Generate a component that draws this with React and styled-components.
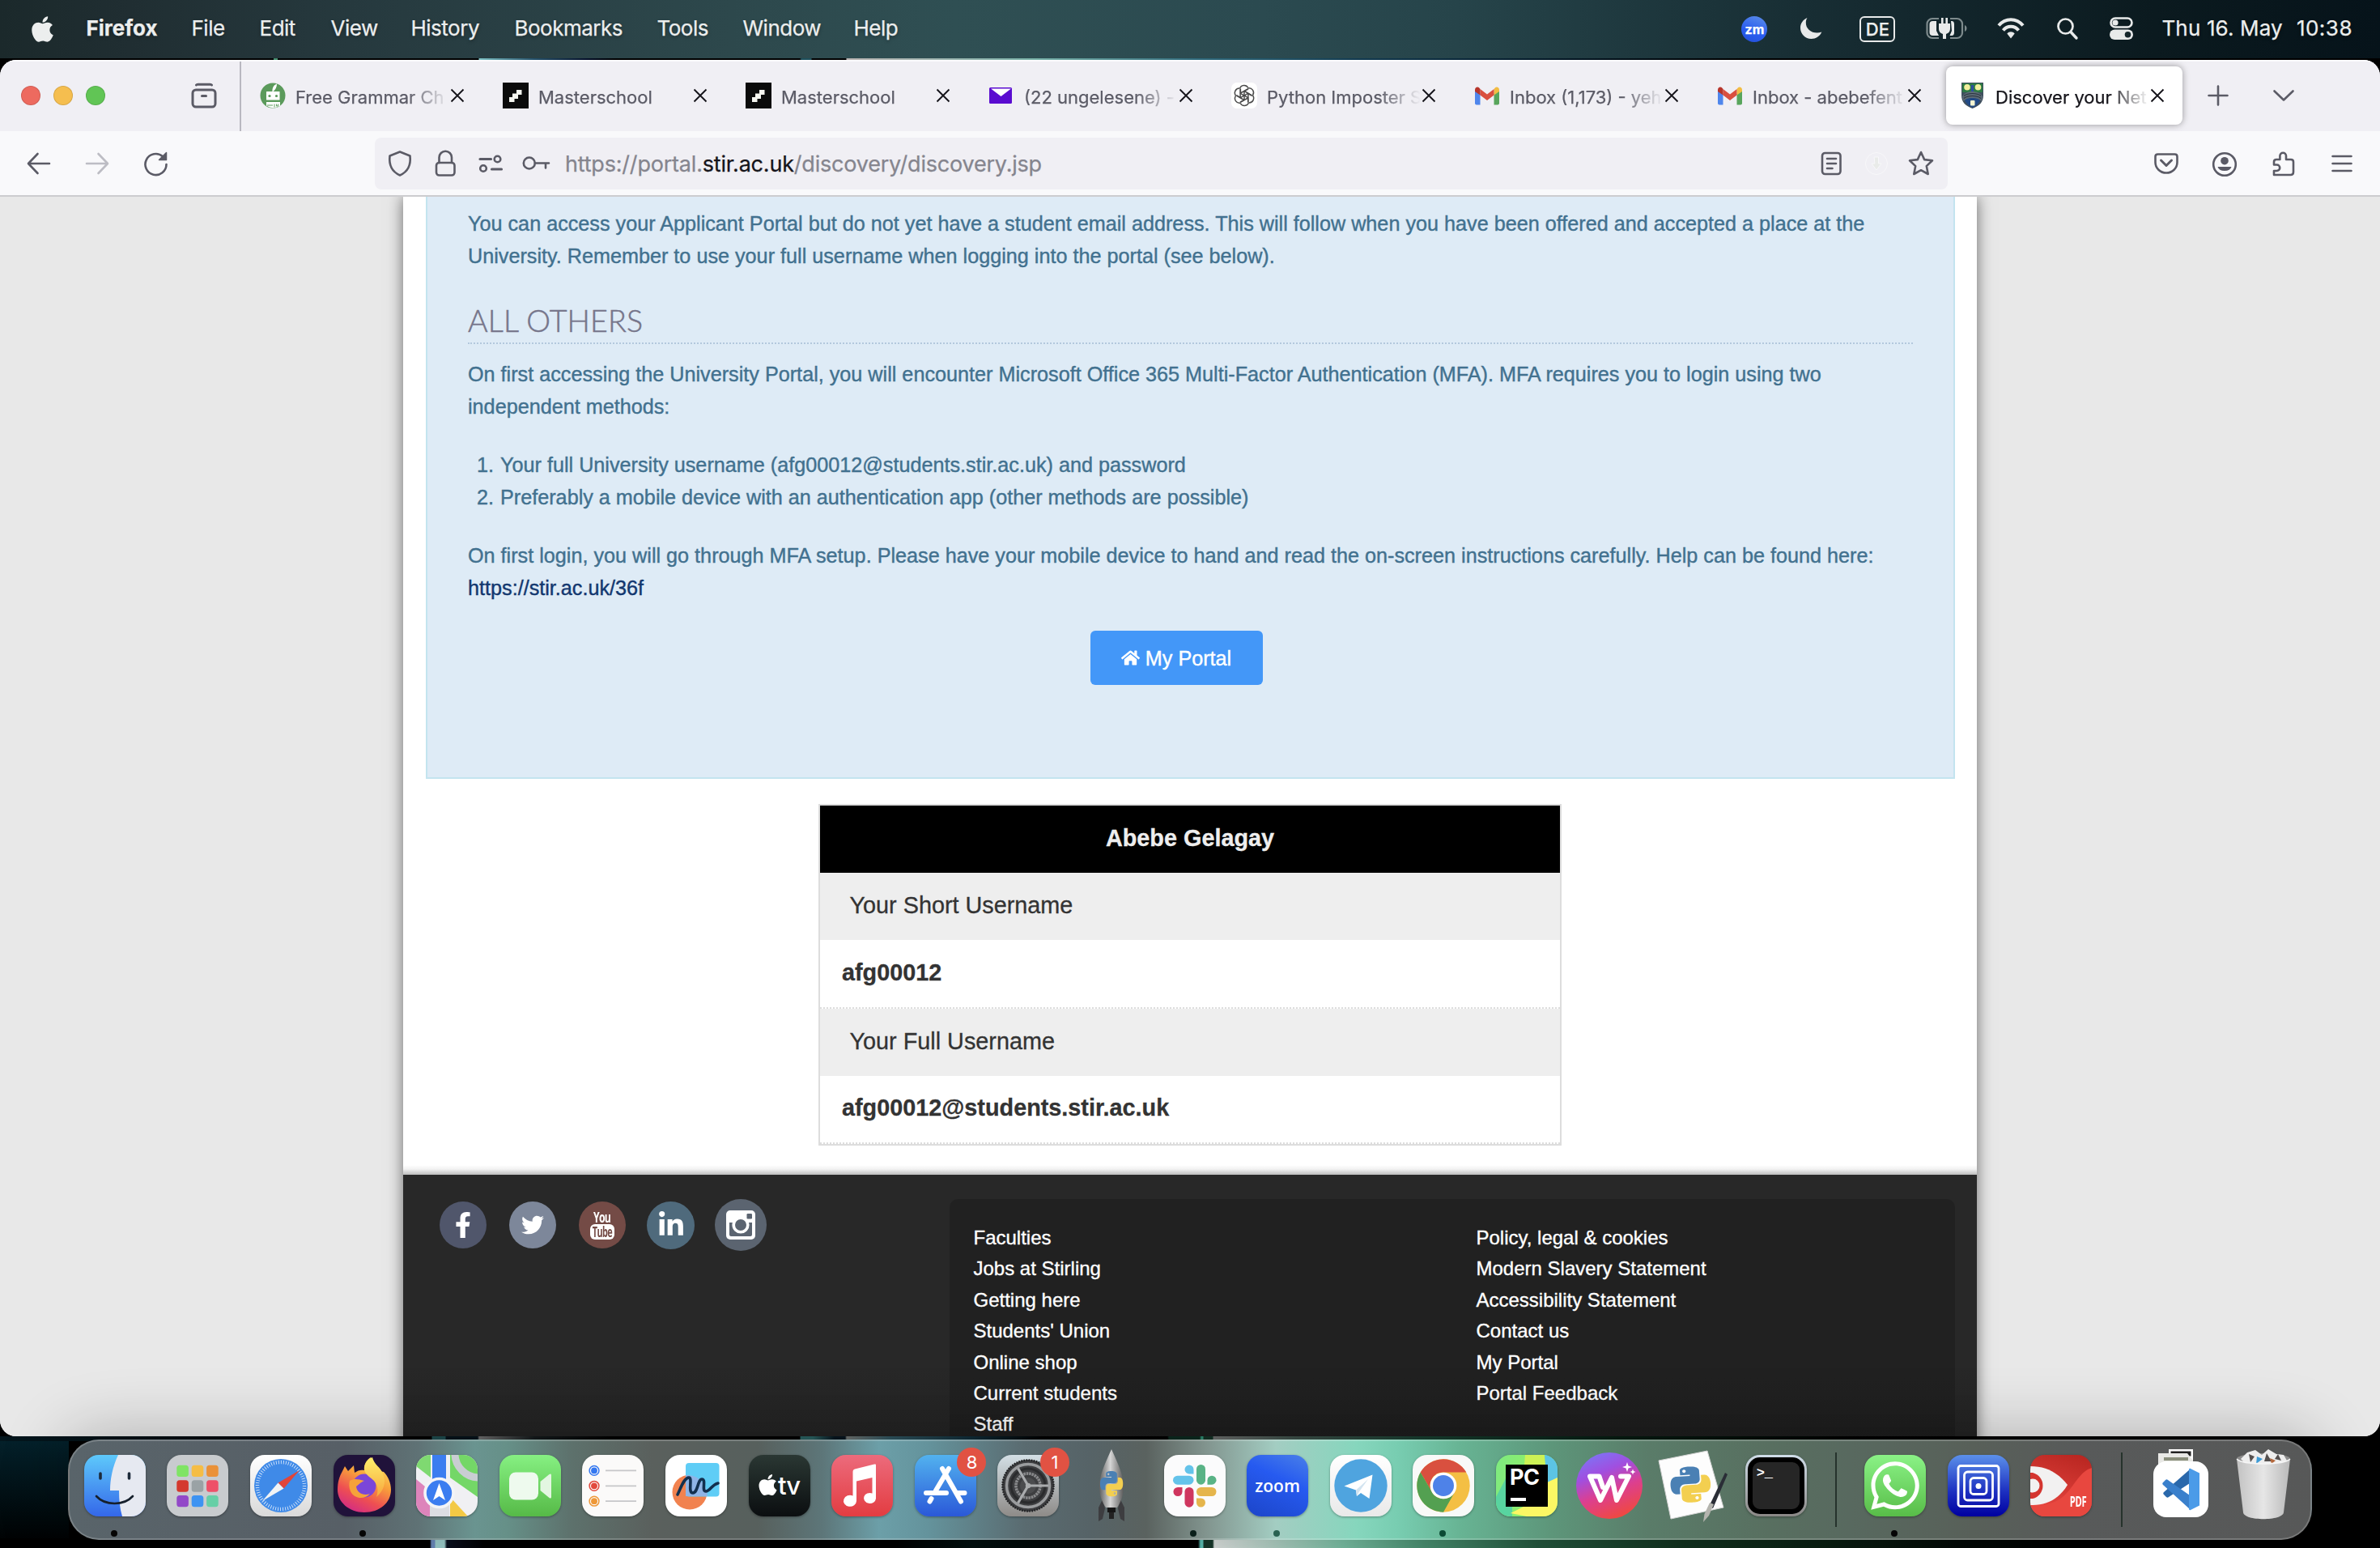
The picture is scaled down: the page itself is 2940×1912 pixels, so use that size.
import React from 'react';
import styled, { createGlobalStyle, css } from 'styled-components';
import { FaApple, FaHome, FaFacebookF, FaTwitter, FaLinkedinIn, FaWhatsapp } from 'react-icons/fa';

const SANS = '"Liberation Sans", Arial, sans-serif';
const UI = 'Inter, "Liberation Sans", sans-serif';

const GlobalStyle = createGlobalStyle`
  *, *::before, *::after { box-sizing: border-box; }
  html, body { margin: 0; padding: 0; background: #000; }
  body { width: 2940px; height: 1912px; overflow: hidden; font-family: ${UI}; }
  svg { display: block; flex: none; overflow: visible; }
  p, h2, ol, ul { margin: 0; padding: 0; font-weight: inherit; }
`;

/* ---------- Desktop ---------- */

const Desktop = styled.div`
  width: 2940px;
  height: 1912px;
  display: flex;
  flex-direction: column;
  overflow: hidden;
  background:
    linear-gradient(90deg, #000 0 338px, #3f8a6a 338px 343px, #000 343px 591px, #7ec3c6 592px, #24516b 660px, #05102a 725px, #000 760px 988px, #1d4f5c 990px 1002px, #000 1003px 1045px, #b9b3b1 1046px, #9fb5b0 1160px, #79b3a9 1280px, #2f6a7c 1480px, #123a50 1680px, #061c2b 1900px, #000 2150px) 0 72px / 100% 3px no-repeat,
    linear-gradient(90deg, #04161d 0, #020a0e 300px, #000 500px 533px, #1e4d50 534px 550px, #06131b 551px 590px, #6f6f6f 592px, #141a1c 660px, #000 760px 988px, #2a6262 989px 1004px, #07151f 1031px 1044px, #6f7472 1046px, #2f5560 1100px, #0f2c38 1200px, #000 1290px 1442px, #0c2a20 1444px 1482px, #2f8f74 1484px 1486px, #143226 1487px 1498px, #6c6e6d 1499px, #3c5049 1600px, #173f30 1760px, #061c12 2000px, #000 2300px) 0 1774px / 100% 6px no-repeat,
    linear-gradient(90deg, #000 0 531px, #6f8fc4 533px 537px, #a3d6d5 538px 549px, #0a1020 552px, #000 600px 1100px, #02100f 1200px, #000 1400px 1480px, #5fc7bb 1483px 1486px, #183a2c 1487px 1498px, #e3e8e6 1500px, #b7d6ca 1570px, #7cc4a8 1660px, #4b9474 1760px, #255a40 1900px, #123420 2080px, #0a2113 2240px, #030a06 2420px, #000 2560px) 0 100% / 100% 12px no-repeat,
    linear-gradient(180deg, #04222c 0, #000 100%) 0 1774px / 85px 138px no-repeat,
    #000;
`;

/* ---------- Menu bar ---------- */

const MenuBar = styled.header`
  flex: none;
  height: 72px;
  margin-bottom: 2px;
  padding: 0 34px 3px 39px;
  display: flex;
  align-items: center;
  color: #eceeee;
  font: 400 26px/32px ${UI};
  letter-spacing: -0.5px;
  text-shadow: 0 2px 4px rgba(0, 0, 0, 0.35);
  -webkit-text-stroke: 0.25px currentColor;
  background: linear-gradient(90deg, #1b292b 0, #202e32 160px, #26393e 430px, #2d484c 900px, #2f4f53 1180px, #2b4a50 1560px, #26444a 1800px, #1d363c 2060px, #14282e 2350px, #0b1a1f 2660px, #06131a 2940px);
`;
const AppleMark = styled(FaApple)`
  width: 27px;
  height: 36px;
  margin: 2px 40.5px 0 0;
`;
const MenuItem = styled.span`
  width: ${(p) => p.$w}px;
  white-space: nowrap;
  ${(p) => p.$bold && css`font-weight: 700; letter-spacing: 0;`}
`;
const StatusArea = styled.div`
  margin-left: auto;
  display: flex;
  align-items: center;
`;
const Status = styled.span`
  margin-left: ${(p) => p.$gap}px;
  letter-spacing: ${(p) => p.$ls || 0}px;
  white-space: nowrap;
`;
const ZoomDot = styled(Status)`
  width: 32px;
  height: 32px;
  margin-top: 2px;
  border-radius: 50%;
  display: grid;
  place-items: center;
  background: linear-gradient(200deg, #5d8fe8, #2a5cf0 60%, #2450d8);
  color: #fff;
  font: 700 16px/20px ${UI};
  text-shadow: none;
`;
const LangBox = styled(Status)`
  width: 44px;
  height: 32px;
  margin-top: 2px;
  border: 2px solid #e8eaea;
  border-radius: 6px;
  display: grid;
  place-items: center;
  font: 500 22px/26px ${UI};
`;

/* ---------- Browser window ---------- */

const BrowserWindow = styled.section`
  flex: none;
  height: 1700px;
  display: flex;
  flex-direction: column;
  border-radius: 20px;
  overflow: hidden;
  background: #f9f9fb;
`;
const TabStrip = styled.nav`
  flex: none;
  height: 88px;
  display: flex;
  align-items: center;
  background: #f0eff4;
  box-shadow: inset 0 2px 0 #fbfbfd;
`;
const TrafficLights = styled.div`
  display: flex;
  gap: 16px;
  padding-left: 26px;
  width: 236px;
`;
const Light = styled.i`
  width: 24px;
  height: 24px;
  border-radius: 50%;
  background: ${(p) => p.$c};
  border: 1px solid rgba(0, 0, 0, 0.12);
`;
const StripDivider = styled.i`
  width: 2px;
  height: 86px;
  margin: 2px 6px 0 28px;
  background: #b9b8c0;
`;
const Tab = styled.div`
  flex: none;
  width: 292px;
  height: 72px;
  margin-right: 8px;
  padding-left: 17px;
  border-radius: 8px;
  display: flex;
  align-items: center;
  color: ${(p) => (p.$active ? '#15141a' : '#5b5b66')};
  ${(p) => p.$active && css`background: #fff; box-shadow: 0 0 8px rgba(0, 0, 0, 0.38);`}
`;
const TabLabel = styled.span`
  width: 190px;
  margin-left: 12px;
  padding-top: 3px;
  overflow: hidden;
  white-space: nowrap;
  font: 400 22px/30px ${UI};
  -webkit-text-stroke: 0.25px currentColor;
  mask-image: linear-gradient(90deg, #000 138px, transparent 190px);
`;
const CloseIcon = styled.svg.attrs({ viewBox: '0 0 18 18' })`
  width: 18px;
  height: 18px;
  margin-left: 1px;
  stroke: #15141a;
  stroke-width: 1.9;
  fill: none;
`;
const StripIcon = styled.svg`
  width: 32px;
  height: 32px;
  margin-left: ${(p) => p.$gap || 0}px;
  fill: none;
  stroke: #5b5b66;
  stroke-width: ${(p) => p.$sw || 3};
  stroke-linecap: round;
  stroke-linejoin: round;
`;
const Toolbar = styled.div`
  flex: none;
  height: 81px;
  display: flex;
  align-items: center;
  padding: 0 31px 0 32px;
  border-bottom: 2px solid #cccccf;
  background: #f9f9fb;
`;
const IconGroup = styled.div`
  display: flex;
  align-items: center;
  gap: ${(p) => p.$gap}px;
`;
const UrlBar = styled.div`
  width: 1943px;
  height: 64px;
  margin: 0 auto 0 255px;
  padding: 0 17px 0 15px;
  border-radius: 8px;
  display: flex;
  align-items: center;
  background: #f0eff4;
`;
const UrlText = styled.span`
  flex: 1;
  margin-left: 20px;
  padding-top: 3px;
  font: 400 27px/36px ${UI};
  letter-spacing: -0.2px;
  -webkit-text-stroke: 0.25px currentColor;
  color: #85858e;
  b { font-weight: 400; color: #15141a; }
`;
const ToolSvg = styled.svg.attrs({ viewBox: '0 0 32 32' })`
  width: 32px;
  height: 32px;
  fill: none;
  stroke: ${(p) => p.$c || '#5b5b66'};
  stroke-width: 2.6;
  stroke-linecap: round;
  stroke-linejoin: round;
`;

/* ---------- Web page ---------- */

const Viewport = styled.main`
  flex: 1;
  min-height: 0;
  overflow: hidden;
  background: #e8e8e8;
`;
const Sheet = styled.div`
  width: 1944px;
  margin-left: 498px;
  background: #fff;
  box-shadow: 0 0 18px rgba(0, 0, 0, 0.55);
`;
const InfoPanel = styled.section`
  width: 1889px;
  height: 719px;
  margin-left: 28px;
  padding: 12.6px 50px 0 50px;
  border: 2px solid #c3e4ef;
  border-top: 0;
  background: #deebf6;
  color: #42718f;
  font: 400 25.2px/40.3px ${SANS};
  letter-spacing: 0.005px;
  -webkit-text-stroke: 0.4px currentColor;
`;
const Para = styled.p`
  margin-top: ${(p) => p.$mt || 0}px;
  white-space: nowrap;
`;
const PanelHeading = styled.h2`
  height: 52px;
  margin-top: 37px;
  border-bottom: 2px dotted #b3c8dd;
  font: 300 37.6px/46px Lato, ${SANS};
  letter-spacing: 0.15px;
  color: #76758a;
  -webkit-text-stroke: 0.5px currentColor;
`;
const Steps = styled.ol`
  margin-top: 31.6px;
  list-style: none;
`;
const Step = styled.li`
  display: grid;
  grid-template-columns: 32px auto;
  column-gap: 8px;
  & > span:first-child { text-align: right; }
`;
const PanelLink = styled.a`
  color: #12376f;
`;
const ButtonRow = styled.div`
  margin-top: 33px;
  padding-right: 35px;
  display: flex;
  justify-content: center;
`;
const PortalButton = styled.button`
  width: 213px;
  height: 67px;
  border: 0;
  border-radius: 6px;
  display: flex;
  align-items: center;
  justify-content: center;
  gap: 7px;
  background: #4397f8;
  color: #fff;
  font: 400 25.2px/32px ${SANS};
  -webkit-text-stroke: 0.4px currentColor;
  svg { width: 23px; height: 23px; }
`;
const UserCard = styled.section`
  width: 918px;
  margin: 31px 0 0 513px;
  border: 2px solid #ddd;
  font: 400 28.8px/34px ${SANS};
  color: #333;
  -webkit-text-stroke: 0.3px currentColor;
`;
const CardRow = styled.div`
  height: ${(p) => p.$h || 83}px;
  display: flex;
  align-items: center;
  ${(p) => p.$kind === 'head' && css`justify-content: center; padding-bottom: 3px; background: #000; color: #eee; font-weight: 700;`}
  ${(p) => p.$kind === 'label' && css`padding: 0 0 4px 36.5px; background: #eee;`}
  ${(p) => p.$kind === 'value' && css`padding: 0 0 4px 27px; background: #fff; font-weight: 700; border-bottom: 2px dotted #ddd;`}
`;
const SheetGap = styled.div`
  height: 36px;
  background: linear-gradient(180deg, rgba(0, 0, 0, 0) 24px, rgba(0, 0, 0, 0.05) 29px, rgba(0, 0, 0, 0.26) 36px);
`;
const Footer = styled.footer`
  height: 340px;
  padding: 30px 27px 0 44.5px;
  display: flex;
  align-items: flex-start;
  justify-content: space-between;
  background: linear-gradient(180deg, #282828 240px, #232323 320px);
`;
const SocialRow = styled.div`
  height: 64px;
  display: flex;
  align-items: center;
`;
const Social = styled.a`
  width: ${(p) => p.$d}px;
  height: ${(p) => p.$d}px;
  margin-right: ${(p) => p.$mr}px;
  border-radius: 50%;
  display: flex;
  flex-direction: column;
  align-items: center;
  justify-content: center;
  background: ${(p) => p.$c};
  color: #fff;
`;
const YouWord = styled.span`
  font: 700 18px/17px "Open Sans", ${SANS};
  letter-spacing: -1px;
  transform: scaleX(0.68);
`;
const TubeWord = styled.span`
  width: 30px;
  height: 19px;
  border-radius: 6px;
  display: flex;
  justify-content: center;
  background: #fff;
  color: #744b46;
  font: 700 17px/19px "Open Sans", ${SANS};
  letter-spacing: -1px;
  & > span { transform: scaleX(0.64); }
`;
const LinkPanel = styled.div`
  width: 1242px;
  height: 320px;
  padding: 29px 0 0 29.5px;
  border-radius: 10px;
  display: grid;
  grid-template-columns: 621px 1fr;
  background: linear-gradient(180deg, #212121 220px, #1d1d1d 300px);
`;
const LinkList = styled.ul`
  list-style: none;
  color: #fff;
  font: 400 24px/38.4px ${SANS};
  -webkit-text-stroke: 0.35px currentColor;
`;

/* ---------- Dock ---------- */

const Dock = styled.nav`
  position: absolute;
  left: 84px;
  top: 1778px;
  width: 2772px;
  height: 124px;
  padding-left: 4.5px;
  border: 2px solid rgba(255, 255, 255, 0.2);
  border-radius: 38px;
  display: flex;
  align-items: center;
  box-shadow: 0 0 80px 8px rgba(0, 0, 0, 0.24);
  background-origin: border-box;
  background: linear-gradient(90deg, #59646a 0, #575f66 340px, #5f7275 430px, #6a9490 500px, #669088 540px, #5d716c 620px, #5a605d 720px, #57605d 850px, #5d7679 930px, #6c9fa8 1000px, #64939c 1060px, #5a6b70 1180px, #566367 1260px, #5a625f 1330px, #82958f 1405px, #a3cdc2 1490px, #86d6bd 1590px, #78cdb1 1640px, #67b393 1720px, #5d967a 1830px, #5a7c69 1950px, #586f60 2100px, #58695f 2200px, #586059 2350px, #585a5a 2480px, #575858 2772px);
`;
const Slot = styled.div`
  position: relative;
  flex: none;
  width: 102.6px;
  height: 120px;
  display: flex;
  flex-direction: column;
  align-items: center;
  padding-top: ${(p) => p.$top ?? 17}px;
`;
const RunningDot = styled.i`
  position: absolute;
  left: 46px;
  top: 110px;
  width: 8px;
  height: 8px;
  border-radius: 50%;
  background: ${(p) => p.$c || '#050505'};
`;
const Badge = styled.b`
  position: absolute;
  left: 66px;
  top: 8px;
  width: 36px;
  height: 36px;
  border-radius: 50%;
  display: grid;
  place-items: center;
  background: #e15243;
  color: #fff;
  font: 400 22px/26px ${UI};
`;
const DockDivider = styled.i`
  flex: none;
  width: 2px;
  height: 92px;
  margin: 0 20.8px 0 22px;
  background: #26332c;
`;
const Tile = styled.div`
  width: 76px;
  height: 76px;
  border-radius: 18px;
  overflow: hidden;
  display: grid;
  place-items: center;
  background: ${(p) => p.$bg};
  color: #fff;
  box-shadow: 0 1px 3px rgba(0, 0, 0, 0.35);
  & > * { grid-area: 1 / 1; }
`;
const Art = styled.svg.attrs({ viewBox: '0 0 76 76' })`
  width: 76px;
  height: 76px;
`;
const TvMark = styled.span`
  display: flex;
  align-items: center;
  font: 500 31px/32px ${UI};
  letter-spacing: -1px;
  svg { width: 23px; height: 30px; margin: -3px 1px 0 0; }
`;
const ZoomWord = styled.span`
  font: 600 21px/24px "Open Sans", ${UI};
`;
const PcBox = styled.div`
  width: 52px;
  height: 52px;
  padding: 2px 0 0 5px;
  background: #000;
  font: 700 27px/28px ${UI};
  letter-spacing: -0.5px;
  &::after { content: ''; display: block; width: 19px; height: 3.5px; margin: 11px 0 0 1px; background: #fff; }
`;
const TermScreen = styled.div`
  width: 70px;
  height: 70px;
  border-radius: 15px;
  border: 6px solid #000;
  padding: 4px 0 0 5px;
  background: #262626;
  font: 700 17px/20px "Liberation Mono", monospace;
  color: #fff;
`;
const PdfWord = styled.span`
  align-self: end;
  justify-self: end;
  margin: 0 7px 8px 0;
  font: 700 17px/20px "Open Sans", ${SANS};
  letter-spacing: -0.4px;
  transform: scaleX(0.66);
  transform-origin: 100% 50%;
`;

const PY_TOP = 'M14.25.18l.9.2.73.26.59.3.45.32.34.34.25.34.16.33.1.3.04.26.02.2-.01.13V8.5l-.05.63-.13.55-.21.46-.26.38-.3.31-.33.25-.35.19-.35.14-.33.1-.3.07-.26.04-.21.02H8.77l-.69.05-.59.14-.5.22-.41.27-.33.32-.27.35-.2.36-.15.37-.1.35-.07.32-.04.27-.02.21v3.06H3.17l-.21-.03-.28-.07-.32-.12-.35-.18-.36-.26-.36-.36-.35-.46-.32-.59-.28-.73-.21-.88-.14-1.05-.05-1.23.06-1.22.16-1.04.24-.87.32-.71.36-.57.4-.44.42-.33.42-.24.4-.16.36-.1.32-.05.24-.01h.16l.06.01h8.16v-.83H6.18l-.01-2.75-.02-.37.05-.34.11-.31.17-.28.25-.26.31-.23.38-.2.44-.18.51-.15.58-.12.64-.1.71-.06.77-.04.84-.02 1.27.05zm-6.3 1.98l-.23.33-.08.41.08.41.23.34.33.22.41.09.41-.09.33-.22.23-.34.08-.41-.08-.41-.23-.33-.33-.22-.41-.09-.41.09z';
const PY_BOTTOM = 'M21.1 6.11l.28.06.32.12.35.18.36.27.36.35.35.47.32.59.28.73.21.88.14 1.04.05 1.23-.06 1.23-.16 1.04-.24.86-.32.71-.36.57-.4.45-.42.33-.42.24-.4.16-.36.09-.32.05-.24.02-.16-.01h-8.22v.82h5.84l.01 2.76.02.36-.05.34-.11.31-.17.29-.25.25-.31.24-.38.2-.44.17-.51.15-.58.13-.64.09-.71.07-.77.04-.84.01-1.27-.04-1.07-.14-.9-.2-.73-.25-.59-.3-.45-.33-.34-.34-.25-.34-.16-.33-.1-.3-.04-.25-.02-.2.01-.13v-5.34l.05-.64.13-.54.21-.46.26-.38.3-.32.33-.24.35-.2.35-.14.33-.1.3-.06.26-.04.21-.02.13-.01h5.84l.69-.05.59-.14.5-.21.41-.28.33-.32.27-.35.2-.36.15-.36.1-.35.07-.32.04-.28.02-.21V6.07h2.09l.14.01zm-6.47 14.25l-.23.33-.08.41.08.41.23.33.33.23.41.08.41-.08.33-.23.23-.33.08-.41-.08-.41-.23-.33-.33-.23-.41-.08-.41.08z';

const Python = () => (
  <>
    <path d={PY_TOP} fill="#4a80b4" />
    <path d={PY_BOTTOM} fill="#f3cf50" />
  </>
);

/* ---------- Favicons ---------- */

const Fav = styled.svg.attrs({ viewBox: '0 0 32 32' })`
  width: 32px;
  height: 32px;
`;

const Favicons = {
  grammar: (
    <Fav>
      <circle cx="16" cy="16" r="15.5" fill="#5b9a5b" />
      <path d="M15.500 11C15 7 17 3 21 1.500c0 4-1.500 7-4.500 9.500z" fill="#fff" />
      <rect x="8" y="11" width="16.500" height="10.500" rx="0.500" fill="#fff" />
      <circle cx="12" cy="16.500" r="1.600" fill="#5b9a5b" />
      <circle cx="20.500" cy="16.500" r="1.600" fill="#5b9a5b" />
      <path d="M8 24h17v4.500a15 15 0 0 1-17 0z" fill="#fff" />
      <path d="M9 28h7M18 26.500v4M20.500 26.500v2.500h2v-2.500" stroke="#5b9a5b" fill="none" />
    </Fav>
  ),
  master: (
    <Fav>
      <rect width="32" height="32" fill="#0b0b0b" />
      <path d="M8 24v-6h4v-4.500h5V9h6.500v6H19v5h-4.500v4z" fill="#f4f5ef" />
    </Fav>
  ),
  mail: (
    <Fav>
      <rect x="1" y="6" width="28" height="20" rx="1.500" fill="#5a0cd0" />
      <path d="M3 7.500h25L15.500 17z" fill="#fff" />
    </Fav>
  ),
  gpt: (
    <Fav>
      <rect width="32" height="32" rx="7" fill="#fff" />
      <g transform="translate(16 16)" fill="none" stroke="#4a4a4a" strokeWidth="1.500">
        {[0, 60, 120, 180, 240, 300].map((a) => (
          <path key={a} transform={`rotate(${a})`} d="M-5.500 -8.500A5.600 5.600 0 0 1 4.800 -9.500M-4.600 -8.500V-2.600L0.500 0.300M-4.600 -3L4.500 -8.200" />
        ))}
      </g>
    </Fav>
  ),
  gmail: (
    <Fav>
      <path d="M1 9v16.500A2 2 0 0 0 3 27.500h4.500V14z" fill="#4f86ec" />
      <path d="M31 9v16.500a2 2 0 0 1-2 2h-4.500V14z" fill="#58a55c" />
      <path d="M24.500 8v7.500L31 11V9c0-3.500-3.500-4.500-5.500-2.300z" fill="#f2bd42" />
      <path d="M7.500 15.500V8l8.500 6.500L24.500 8v7.500L16 22z" fill="#d94f3f" />
      <path d="M1 9v2l6.500 4.500V8L6.500 6.700C4.500 4.500 1 5.500 1 9z" fill="#b7352b" />
    </Fav>
  ),
  stirling: (
    <Fav>
      <path d="M2 0h27v16c0 8-5 13-13.500 16C7 29 2 24 2 16z" fill="#3f4f5e" />
      <path d="M3 1h25v11H3z" fill="#2d7a45" />
      <path d="M15.500 3v8" stroke="#2f4fa0" strokeWidth="3" />
      <circle cx="9" cy="5.800" r="3.800" fill="#f1ef9c" />
      <circle cx="22.500" cy="5.800" r="3.800" fill="#f1ef9c" />
      <path d="M3 17c5-8 20-8 25 0l-1.500 6c-5-5-17-5-22 0z" fill="#5d6b76" />
      <path d="M5 16.500c5-4 16-4 21 0M5 19.500c5-4 16-4 21 0" fill="none" stroke="#2a353f" strokeWidth="1.200" />
      <path d="M6 22c3-4 16-4 19 0-2 4-5 7-9.500 9C11 29 8 26 6 22z" fill="#224a86" />
      <rect x="13" y="22" width="5.500" height="6.500" rx="1" fill="#f6f5d2" />
    </Fav>
  ),
};

const TABS = [
  ['grammar', 'Free Grammar Ch'],
  ['master', 'Masterschool'],
  ['master', 'Masterschool'],
  ['mail', '(22 ungelesene) -'],
  ['gpt', 'Python Imposter S'],
  ['gmail', 'Inbox (1,173) - yeh'],
  ['gmail', 'Inbox - abebefent'],
  ['stirling', 'Discover your Net'],
];

const MENUS = [['File', 84], ['Edit', 88], ['View', 99], ['History', 128], ['Bookmarks', 176], ['Tools', 106], ['Window', 137], ['Help', 60]];

/* ---------- Dock artwork ---------- */

const Finder = () => (
  <Tile $bg="linear-gradient(180deg,#5ec9fb,#3467e9)">
    <Art>
      <path d="M42 0C35 15 32 30 32 44h11c0 12 1 22 4 32h29V0z" fill="#e6e9f1" />
      <path d="M20 23v6M55.500 23v6" stroke="#1d2a3a" strokeWidth="3.600" strokeLinecap="round" />
      <path d="M15 51c11 12 34 12 45 0" stroke="#16202c" strokeWidth="2.600" fill="none" strokeLinecap="round" />
    </Art>
  </Tile>
);
const PAD_COLORS = ['#7fe464', '#f5bd45', '#ea9138', '#d4392e', '#9aa2a5', '#ee5068', '#9248c8', '#3d93f2', '#66cfa6'];
const Launchpad = () => (
  <Tile $bg="#c8cbce">
    <Art>
      {PAD_COLORS.map((c, i) => (
        <rect key={c} x={12.3 + (i % 3) * 18.4} y={12.700 + Math.floor(i / 3) * 18.600} width="14.600" height="14.400" rx="3.500" fill={c} />
      ))}
    </Art>
  </Tile>
);
const Safari = () => (
  <Tile $bg="linear-gradient(180deg,#fff,#d9d9d9)">
    <Art>
      <circle cx="38" cy="38" r="33" fill="#3f8ae8" />
      <circle cx="38" cy="38" r="29" fill="none" stroke="#d7e7fb" strokeWidth="4.500" strokeDasharray="0.900 2.130" />
      <path d="M61 19L41.500 41.500 34.500 34.500z" fill="#e0453a" />
      <path d="M15 57L34.500 34.500 41.500 41.500z" fill="#f1f3f5" />
    </Art>
  </Tile>
);
const Firefox = () => (
  <Tile $bg="#20123a">
    <Art>
      <defs>
        <linearGradient id="ffBody" x1="0.800" y1="0" x2="0.300" y2="1">
          <stop offset="0" stopColor="#fce866" /><stop offset="0.400" stopColor="#f8a13a" /><stop offset="0.720" stopColor="#ee4f52" /><stop offset="1" stopColor="#d32c83" />
        </linearGradient>
        <linearGradient id="ffTail" x1="0.500" y1="0" x2="0.500" y2="1">
          <stop offset="0" stopColor="#fdf06c" /><stop offset="1" stopColor="#f8a63c" />
        </linearGradient>
      </defs>
      <path d="M11 20l3-6 4 6 7-7 1 9c4-3 8-4 12-3-1-7 3-13 8-16 2 9 8 11 11 17l5 1c5 5 9 13 9 22 0 16-14 28-33 28S5 58 5 43c0-9 2-16 6-23z" fill="url(#ffBody)" />
      <circle cx="38" cy="38" r="14.500" fill="#7b46d8" />
      <path d="M20 32c6-3 10-2 18 0-5 2-7 5-10 7 1 8 9 12 17 9-7 8-20 6-24-3-2-5-2-9-1-13z" fill="#f6a23a" />
      <path d="M48 3c2 9 10 12 13 20 5 12 0 22-8 29 3-9 1-15-3-20-5-5-12-8-12-15 0-6 4-12 10-14z" fill="url(#ffTail)" />
    </Art>
  </Tile>
);
const Maps = () => (
  <Tile $bg="#f0f0f3">
    <Art>
      <path d="M0 0h18v28L0 14z" fill="#7fd971" />
      <path d="M42 0h34v52L42 28z" fill="#74d767" />
      <path d="M48 -4a30 30 0 0 0 32 32" fill="none" stroke="#c9cdd2" strokeWidth="9" />
      <path d="M0 30l17 14v32H0z" fill="#dd84bb" />
      <path d="M42 52l22 24H42z" fill="#f3c945" />
      <rect x="17" y="50" width="24" height="26" fill="#dcdde2" />
      <rect x="20" width="17" height="34" fill="#3b7df0" />
      <circle cx="28.500" cy="47" r="17.500" fill="#3b7df0" stroke="#f3f4f7" strokeWidth="3.600" />
      <path d="M28.500 35l7.500 21-7.500-5-7.500 5z" fill="#fff" />
    </Art>
  </Tile>
);
const FaceTime = () => (
  <Tile $bg="linear-gradient(180deg,#86f082,#56ba47)">
    <Art>
      <rect x="12" y="21.500" width="36" height="34" rx="8" fill="#eefaee" />
      <path d="M50.500 33l11-9c1.500-1 2.500-.5 2.500 1v27c0 1.500-1 2-2.500 1l-11-9z" fill="#e3f6e1" />
    </Art>
  </Tile>
);
const Reminders = () => (
  <Tile $bg="#fbfaf9">
    <Art>
      {['#3478f0', '#e2493c', '#ee9838'].map((c, i) => (
        <g key={c} transform={`translate(0 ${19.400 + i * 18.900})`}>
          <circle cx="15" r="5.900" fill="none" stroke={c} strokeWidth="1.500" />
          <circle cx="15" r="3.900" fill={c} />
          <path d="M29 0h38" stroke="#c6c6c9" strokeWidth="1.800" />
        </g>
      ))}
    </Art>
  </Tile>
);
const Freeform = () => (
  <Tile $bg="#fff">
    <Art>
      <circle cx="30" cy="46" r="21.500" fill="#f1824f" />
      <rect x="25" y="10" width="41.500" height="41.500" rx="4" fill="#5fcdf6" />
      <path d="M25 25c13-1 26 8 27 26H25z" fill="#8fb4e6" />
      <path d="M15 49c4-8 8-21 14-21 5 0-2 19 5 19 6 0 6-17 11-17 6 0-1 15 5 15 5 0 7-8 15-10" fill="none" stroke="#12304f" strokeWidth="3.600" strokeLinecap="round" />
    </Art>
  </Tile>
);
const AppleTv = () => (
  <Tile $bg="linear-gradient(180deg,#2a3733,#0b0e10)">
    <TvMark><FaApple />tv</TvMark>
  </Tile>
);
const Music = () => (
  <Tile $bg="linear-gradient(180deg,#ec6b7c,#e33c41)">
    <Art>
      <path d="M55 12.500v41.500a7.500 6.500 0 1 1-4.500-6.500V28L31 32.500V57a8 7 0 1 1-4.500-6.500V21c0-2 .8-3 2.500-3.500L53 11.500c1.300-.3 2 0 2 1z" fill="#fff" />
    </Art>
  </Tile>
);
const AppStore = () => (
  <Tile $bg="linear-gradient(180deg,#52b2ef,#2a58d8)">
    <Art>
      <g stroke="#fff" strokeWidth="6" strokeLinecap="round">
        <path d="M42 17L26 44M20.500 54L18.500 57.500M34 17L57 57.500M14 47H39M52 47H61.500" />
      </g>
    </Art>
  </Tile>
);
const Settings = () => (
  <Tile $bg="linear-gradient(180deg,#d3dfe5,#8e8b88)">
    <Art fill="none">
      <circle cx="38" cy="38" r="32" fill="#3d3e40" />
      <circle cx="38" cy="38" r="31.500" stroke="#1f2022" strokeWidth="2.500" strokeDasharray="1.600 1.500" />
      <circle cx="38" cy="38" r="26.500" stroke="#9a9c9e" strokeWidth="3.500" />
      <circle cx="38" cy="38" r="21" stroke="#2a2b2d" strokeWidth="3" />
      <circle cx="38" cy="38" r="15" stroke="#88898b" strokeWidth="3.600" strokeDasharray="2.600 .8" />
      <circle cx="38" cy="38" r="10" fill="#4b4c4e" />
      <path d="M38 38H63M38 38L25.500 16.500M38 38L25.500 59.500" stroke="#a9abad" strokeWidth="3.200" />
      <circle cx="38" cy="38" r="3.200" fill="#a9abad" />
    </Art>
  </Tile>
);
const Rocket = () => (
  <svg width="36" height="90" viewBox="0 0 36 90">
    <defs>
      <linearGradient id="hull"><stop offset="0" stopColor="#5f5f5f" /><stop offset=".45" stopColor="#d6d6d6" /><stop offset="1" stopColor="#5a5a5a" /></linearGradient>
    </defs>
    <path d="M7 62L2 72v17l5-3 3-13zM29 62l5 10v17l-5-3-3-13z" fill="#3d3d40" />
    <rect x="13" y="70" width="10" height="8" fill="#161616" />
    <path d="M15 78h6v8h-6z" fill="#222" />
    <path d="M18 0c8 18 15 32 15 46 0 12-4 20-8 26H11C7 66 3 58 3 46 3 32 10 18 18 0z" fill="url(#hull)" />
    <g transform="translate(4 27) scale(1.170 1.300)"><Python /></g>
  </svg>
);
const Slack = () => (
  <Tile $bg="#fbfbfc">
    <Art>
      <g fill="#64c3ea"><rect x="11" y="25.700" width="25.500" height="11" rx="5.500" /><path d="M36.500 23.500h-5.300a5.500 5.500 0 1 1 5.300-5.500z" /></g>
      <g fill="#59b386"><rect x="40" y="12" width="11" height="24.700" rx="5.500" /><path d="M53.500 36.700v-5.500a5.500 5.500 0 1 1 5.500 5.500z" /></g>
      <g fill="#e5b54c"><rect x="40" y="40" width="24.500" height="11" rx="5.500" /><path d="M40 53.500h5.500a5.500 5.500 0 1 1-5.500 5.500z" /></g>
      <g fill="#cf365f"><rect x="25.500" y="40" width="11" height="24.700" rx="5.500" /><path d="M22.500 40v5.500a5.500 5.500 0 1 1-5.500-5.500z" /></g>
    </Art>
  </Tile>
);
const Zoom = () => (
  <Tile $bg="linear-gradient(205deg,#4a80e8,#265af0 40%,#1c45c8)">
    <ZoomWord>zoom</ZoomWord>
  </Tile>
);
const Telegram = () => (
  <Tile $bg="linear-gradient(180deg,#fff,#e9e9e9)">
    <Art>
      <circle cx="38" cy="38" r="32.700" fill="#4fa4df" />
      <path d="M17.500 38.500L52.500 24.500 48.500 54 38 47 33 51 32 43.500z" fill="#fff" />
      <path d="M32 43.500L47 30 36 45.500 33 51z" fill="#d3e4f0" />
    </Art>
  </Tile>
);
const Chrome = () => (
  <Tile $bg="#f8f9f8">
    <Art>
      <circle cx="38" cy="38" r="32.700" fill="#f4bf44" />
      <path d="M9.700 21.600A32.700 32.700 0 0 1 66.300 21.600H38A16 16 0 0 0 24 46z" fill="#d9503f" />
      <path d="M9.700 21.600A32.700 32.700 0 0 0 38 70.700L52 46A16 16 0 0 1 24 46z" fill="#53a051" />
      <circle cx="38" cy="38" r="16.300" fill="#fff" />
      <circle cx="38" cy="38" r="13" fill="#4e82e8" />
    </Art>
  </Tile>
);
const PyCharm = () => (
  <Tile $bg="linear-gradient(100deg,#7eea80,#8dee6c 50%,#74e08a)">
    <Art>
      <path d="M0 52L20 14V76H18Q0 76 0 58z" fill="#58d4a0" />
      <path d="M36 0h24l4 34-30-10z" fill="#cdf255" />
      <path d="M60 0h16v30L63 36z" fill="#5cc4e4" />
      <path d="M76 28v48H38L18 72l20-10 25-28z" fill="#fbf764" />
    </Art>
    <PcBox>PC</PcBox>
  </Tile>
);
const Wps = () => (
  <svg width="82" height="82" viewBox="0 0 82 82">
    <defs>
      <linearGradient id="wps" x1=".25" y1="0" x2=".65" y2="1"><stop offset="0" stopColor="#7d74f5" /><stop offset=".3" stopColor="#a04fe0" /><stop offset=".6" stopColor="#dc3f90" /><stop offset="1" stopColor="#f1493c" /></linearGradient>
    </defs>
    <circle cx="41" cy="41" r="41" fill="url(#wps)" />
    <path d="M33 43L28.500 29.500H17L30 59 44 31 50 59 65 29.500H55" fill="none" stroke="#fff" strokeWidth="6" strokeLinejoin="round" strokeLinecap="round" />
    <path d="M63 12l1.500 4.500L69 18l-4.500 1.500L63 24l-1.500-4.500L57 18l4.500-1.500zM70 20.500l1 2.500 2.500 1-2.500 1-1 2.500-1-2.500-2.500-1 2.500-1z" fill="#fff" />
  </svg>
);
const Idle = () => (
  <svg width="86" height="90" viewBox="0 0 86 90">
    <path d="M1 13L61 1 81 71 16 85z" fill="#fdfdfd" stroke="#d3d3d3" />
    <g transform="translate(14 22) scale(2.050 1.850) rotate(-4)"><Python /></g>
    <path d="M83 28l3 2-18 42-5-2z" fill="#2a2d36" />
    <path d="M64 65l5 2-6 14-7 8 1.500-10z" fill="#b4b4ae" />
  </svg>
);
const Terminal = () => (
  <Tile $bg="linear-gradient(180deg,#cfdce8,#8b8886)">
    <TermScreen>&gt;_</TermScreen>
  </Tile>
);
const WhatsAppMark = styled(FaWhatsapp)`
  width: 68px;
  height: 68px;
`;
const WhatsApp = () => (
  <Tile $bg="linear-gradient(180deg,#8af286,#58bd48)"><WhatsAppMark /></Tile>
);
const Nested = () => (
  <Tile $bg="linear-gradient(180deg,#5b90ea,#1c2fc0 60%,#0000a0)">
    <Art fill="none" stroke="#fff" strokeWidth="2.800">
      <rect x="13" y="13.500" width="50" height="50" rx="3" />
      <rect x="20.500" y="21" width="35" height="35" rx="4" />
      <rect x="28" y="28.500" width="20" height="20" rx="4" />
      <circle cx="38" cy="38.500" r="3.500" fill="#fff" stroke="none" />
    </Art>
  </Tile>
);
const Pdf = () => (
  <Tile $bg="linear-gradient(200deg,#b6241f,#ee4b45)">
    <Art>
      <path d="M76 16C62 20 54 38 46 46 36 58 20 64 0 62v14h76z" fill="#e8473f" />
      <path d="M0 14c20 0 34 8 46 23C36 54 20 63 0 62z" fill="#f2f1f1" />
      <path d="M0 22a16.500 16.500 0 0 1 0 32z" transform="translate(3)" fill="#d4352f" />
      <path d="M0 22h3v32H0z" fill="#d4352f" />
      <circle cx="3" cy="38" r="8.500" fill="#f2f1f1" />
    </Art>
    <PdfWord>PDF</PdfWord>
  </Tile>
);
const VsCode = () => (
  <svg width="70" height="86" viewBox="0 0 70 86">
    <path d="M20 1h30v20H20z" fill="#fff" /><path d="M22.500 3.500h25v6h-25z" fill="#222" />
    <path d="M7 6h36l7 9v8H7z" fill="#e9e9e6" />
    <path d="M14 12h30M14 14h30" stroke="#8a8f7c" strokeWidth="2" />
    <rect x="1" y="16" width="68" height="69" rx="16" fill="#fff" />
    <path d="M46 26L14 54c-1 1-1 2 0 3l3 3c1 1 2 1 3 0L46 43z" fill="#2a68ab" />
    <path d="M46 75L13 45c-1-1-1-2 0-3l3-3c1-1 2-1 3 0l27 19z" fill="#3a80cc" />
    <path d="M45 26c0-1 1-1.500 2-1l11 5.500v40L47 76c-1 .5-2 0-2-1z" fill="#4b9be8" />
  </svg>
);
const Trash = () => (
  <svg width="68" height="88" viewBox="0 0 68 88">
    <defs><linearGradient id="bin"><stop offset="0" stopColor="#c2c2c2" /><stop offset=".5" stopColor="#e6e6e6" /><stop offset="1" stopColor="#b9b9b9" /></linearGradient></defs>
    <ellipse cx="34" cy="12" rx="33" ry="7" fill="#8c8c8c" />
    <path d="M6 12l8-8 10-3 8 6 8-7 10 6 9 1 4 7-10 6H14z" fill="#eee" />
    <path d="M16 6l7 3-5 7zM38 5l6 10h-9zM52 6l4 8-8-2z" fill="#55504f" />
    <path d="M26 9l7 3-8 6z" fill="#3d9bd6" /><path d="M42 11l7 3-5 4z" fill="#b4683c" />
    <path d="M1 12c8 8 58 8 66 0L59 78c-1 11-49 11-50 0z" fill="url(#bin)" />
    <path d="M1 12c8 8 58 8 66 0" fill="none" stroke="#f6f6f6" strokeWidth="1.500" />
  </svg>
);

const APPS = [
  [Finder, { dot: '#050505' }], [Launchpad], [Safari], [Firefox, { dot: '#050505' }], [Maps], [FaceTime], [Reminders],
  [Freeform], [AppleTv], [Music], [AppStore, { badge: 8 }], [Settings, { badge: 1 }], [Rocket, { top: 10 }],
  [Slack, { dot: '#0a1f1a' }], [Zoom, { dot: '#2a6252' }], [Telegram], [Chrome, { dot: '#0b4a34' }], [PyCharm],
  [Wps, { top: 14 }], [Idle, { top: 11 }], [Terminal], null, [WhatsApp, { dot: '#050505' }], [Nested], [Pdf], null,
  [VsCode, { top: 9 }], [Trash, { top: 10 }],
];

const FOOTER_LINKS = [
  ['Faculties', 'Jobs at Stirling', 'Getting here', "Students' Union", 'Online shop', 'Current students', 'Staff'],
  ['Policy, legal & cookies', 'Modern Slavery Statement', 'Accessibility Statement', 'Contact us', 'My Portal', 'Portal Feedback'],
];

const STEPS = [
  'Your full University username (afg00012@students.stir.ac.uk) and password',
  'Preferably a mobile device with an authentication app (other methods are possible)',
];

/* ---------- Sections ---------- */

function SystemMenu() {
  return (
    <MenuBar>
      <AppleMark />
      <MenuItem $w={130} $bold>Firefox</MenuItem>
      {MENUS.map(([label, w]) => <MenuItem key={label} $w={w}>{label}</MenuItem>)}
      <StatusArea>
        <ZoomDot $gap={0}>zm</ZoomDot>
        <Status $gap={40}>
          <svg width="28" height="28" viewBox="0 0 28 28"><path d="M9.500 1C4 3.500 1 8 1 13.500 1 21 7 27 14.500 27c5.500 0 10.500-3 12.800-8.500-9 3.500-20-2-19.500-12C7.900 4.500 8.500 2.500 9.500 1z" fill="#e8eaea" /></svg>
        </Status>
        <LangBox $gap={46}>DE</LangBox>
        <Status $gap={38}>
          <svg width="51" height="28" viewBox="0 0 51 28">
            <path d="M16 2H8a6.500 6.500 0 0 0-6.500 6.500v11A6.500 6.500 0 0 0 8 26h8M30 2h8.500A6.500 6.500 0 0 1 45 8.500v11a6.500 6.500 0 0 1-6.500 6.500H30" fill="none" stroke="#7e8b8d" strokeWidth="2.200" />
            <path d="M48 10v8c1.800-.8 2.500-2.300 2.500-4s-.7-3.200-2.500-4z" fill="#7e8b8d" />
            <path d="M13 5H8.500C6 5 4.500 6.500 4.500 9v10c0 2.500 1.500 4 4 4H16l-3-6zM31 5h1c2 0 3 1.500 3 4v10c0 2.500-1 4-3 4h-2.500l2.500-6z" fill="#e8eaea" />
            <path d="M19 1v7h-3v6c0 4 2 6 5 7v6h4v-6c3-1 5-3 5-7V8h-3V1h-2.600v7h-2.800V1z" fill="#e8eaea" />
          </svg>
        </Status>
        <Status $gap={37}>
          <svg width="34" height="26" viewBox="0 0 34 26" fill="none" stroke="#e8eaea" strokeWidth="4">
            <path d="M2 9.500C10-0.300 24-0.300 32 9.500" /><path d="M7.500 15.500c5-6.200 14-6.200 19 0" /><path d="M12.300 19.500c2.500-3 6.900-3 9.400 0L17 25.500z" fill="#e8eaea" stroke="none" />
          </svg>
        </Status>
        <Status $gap={40}>
          <svg width="25" height="26" viewBox="0 0 25 26" fill="none" stroke="#e8eaea" strokeWidth="2.700"><circle cx="10.500" cy="10.500" r="9" /><path d="M17 17.500l7 7.500" strokeWidth="3.400" strokeLinecap="round" /></svg>
        </Status>
        <Status $gap={40}>
          <svg width="29" height="28" viewBox="0 0 29 28"><rect x="1.500" y="1.500" width="26" height="11" rx="5.500" fill="none" stroke="#e8eaea" strokeWidth="2.600" /><circle cx="7" cy="7" r="3.600" fill="#e8eaea" /><rect y="15.500" width="29" height="12.500" rx="6.250" fill="#e8eaea" /><circle cx="22.500" cy="21.700" r="3.800" fill="#15262b" /></svg>
        </Status>
        <Status $gap={35} $ls={0.15}>Thu 16. May</Status>
        <Status $gap={17} $ls={0.5}>10:38</Status>
      </StatusArea>
    </MenuBar>
  );
}

function Tabs() {
  return (
    <TabStrip>
      <TrafficLights><Light $c="#ed6a5f" /><Light $c="#f5be4f" /><Light $c="#61c555" /></TrafficLights>
      <StripIcon viewBox="0 0 32 32"><path d="M6.500 3Q7 2.200 8.500 2.200h15Q25 2.200 25.500 3" /><rect x="2" y="9" width="28" height="21" rx="4" /><path d="M13.500 16.500h5" /></StripIcon>
      <StripDivider />
      {TABS.map(([icon, label], i) => (
        <Tab key={i} $active={i === TABS.length - 1}>
          {Favicons[icon]}
          <TabLabel>{label}</TabLabel>
          <CloseIcon><path d="M1.500 1.500l15 15M16.500 1.500l-15 15" /></CloseIcon>
        </Tab>
      ))}
      <StripIcon $gap={19.500} $sw={2.600} viewBox="0 0 32 32"><path d="M16 4.500v23M4.500 16h23" /></StripIcon>
      <StripIcon $gap={49} $sw={2.600} viewBox="0 0 32 32"><path d="M4.500 10.500L16 21.500 27.500 10.500" /></StripIcon>
    </TabStrip>
  );
}

function NavBar() {
  return (
    <Toolbar>
      <IconGroup $gap={40}>
        <ToolSvg><path d="M29 16H3.500M14.500 4L3 16l11.500 12" /></ToolSvg>
        <ToolSvg $c="#bdbdc4"><path d="M3 16h25.500M17.500 4L29 16 17.500 28" /></ToolSvg>
        <ToolSvg><path d="M29.500 17A13 13 0 1 1 25 7.200" /><path d="M29.500 2.500v9h-9z" fill="#5b5b66" strokeWidth="1.500" /></ToolSvg>
      </IconGroup>
      <UrlBar>
        <IconGroup $gap={24}>
          <ToolSvg><path d="M16 1.500L28.500 6.500Q30.500 24 16 30.500 1.500 24 3.500 6.500z" /></ToolSvg>
          <ToolSvg><rect x="5" y="15" width="22.500" height="15.500" rx="3.500" /><path d="M8.500 15V8.500a7.700 7.700 0 0 1 15.500 0V15" /></ToolSvg>
          <ToolSvg strokeLinecap="butt"><path d="M3 10.500h13.500M17.500 23h12" strokeWidth="3.200" /><circle cx="24.500" cy="10.500" r="3.800" /><circle cx="7" cy="22" r="3.800" /></ToolSvg>
          <ToolSvg><circle cx="7.800" cy="15.500" r="7" /><path d="M15 15.500h17M28 15.500v6" /></ToolSvg>
        </IconGroup>
        <UrlText>https://portal.<b>stir.ac.uk</b>/discovery/discovery.jsp</UrlText>
        <IconGroup $gap={23.500}>
          <ToolSvg><rect x="5" y="3" width="22.500" height="26" rx="3.500" /><path d="M11 10h11M11 16h11M11 22h6.500" /></ToolSvg>
          <ToolSvg $c="#f8f8fa"><circle cx="16" cy="16" r="13.500" strokeWidth="1" /><path d="M13.500 8h5v8h3.500l-6 8-6-8h3.500z" fill="#e9ebe9" strokeWidth="1" /></ToolSvg>
          <ToolSvg><path d="M16 2l4.200 9.100 9.800 1.200-7.200 6.800 1.900 9.900L16 24.200 7.300 29l1.900-9.900L2 12.300l9.800-1.200z" /></ToolSvg>
        </IconGroup>
      </UrlBar>
      <IconGroup $gap={40.500}>
        <ToolSvg><path d="M5.500 4.500h21q3 0 3 3v7a13.500 13 0 0 1-27 0v-7q0-3 3-3z" /><path d="M9.500 12l6.500 6.500 6.500-6.500" strokeWidth="3" /></ToolSvg>
        <ToolSvg><circle cx="16" cy="17" r="13.800" /><circle cx="16" cy="12.700" r="4.800" fill="#5b5b66" stroke="none" /><path d="M7.500 20h17a8.700 6.500 0 0 1-17 0z" fill="#5b5b66" stroke="none" /></ToolSvg>
        <ToolSvg><path d="M4 30h20.500q3.500 0 3.500-3.500V14q0-3-3-3h-6V6.500a3.800 3.800 0 0 0-7.600 0V11H7q-3 0-3 3v3.500h3.500a3.700 3.700 0 0 1 0 7.500H4z" /></ToolSvg>
        <ToolSvg><path d="M4.500 7h23M4.500 16h23M4.500 25h23" /></ToolSvg>
      </IconGroup>
    </Toolbar>
  );
}

function Page() {
  return (
    <Viewport>
      <Sheet>
        <InfoPanel>
          <Para>
            You can access your Applicant Portal but do not yet have a student email address. This will follow when you have been offered and accepted a place at the<br />
            University. Remember to use your full username when logging into the portal (see below).
          </Para>
          <PanelHeading>ALL OTHERS</PanelHeading>
          <Para $mt={16.500}>
            On first accessing the University Portal, you will encounter Microsoft Office 365 Multi-Factor Authentication (MFA). MFA requires you to login using two<br />
            independent methods:
          </Para>
          <Steps>
            {STEPS.map((s, i) => <Step key={s}><span>{i + 1}.</span><span>{s}</span></Step>)}
          </Steps>
          <Para $mt={31.400}>
            On first login, you will go through MFA setup. Please have your mobile device to hand and read the on-screen instructions carefully. Help can be found here:<br />
            <PanelLink>https://stir.ac.uk/36f</PanelLink>
          </Para>
          <ButtonRow><PortalButton><FaHome />My Portal</PortalButton></ButtonRow>
        </InfoPanel>
        <UserCard>
          <CardRow $kind="head">Abebe Gelagay</CardRow>
          <CardRow $kind="label">Your Short Username</CardRow>
          <CardRow $kind="value" $h={85}>afg00012</CardRow>
          <CardRow $kind="label">Your Full Username</CardRow>
          <CardRow $kind="value" $h={84}>afg00012@students.stir.ac.uk</CardRow>
        </UserCard>
        <SheetGap />
        <Footer>
          <SocialRow>
            <Social $d={58} $mr={28.500} $c="#50566b"><FaFacebookF size={32} /></Social>
            <Social $d={58} $mr={27.500} $c="#7d879a"><FaTwitter size={28} /></Social>
            <Social $d={58} $mr={26.500} $c="#744b46"><YouWord>You</YouWord><TubeWord><span>Tube</span></TubeWord></Social>
            <Social $d={59} $mr={24.500} $c="#4f6a7c"><FaLinkedinIn size={34} /></Social>
            <Social $d={64} $mr={0} $c="#5b6470">
              <svg width="36" height="36" viewBox="0 0 36 36">
                <path d="M5 0h26a5 5 0 0 1 5 5v26a5 5 0 0 1-5 5H5a5 5 0 0 1-5-5V5a5 5 0 0 1 5-5z" fill="#fff" />
                <path d="M4 15h4.500a10 10 0 1 0 19 0H32v15a2 2 0 0 1-2 2H6a2 2 0 0 1-2-2z" fill="#5b6470" />
                <circle cx="18" cy="18" r="8.800" fill="#5b6470" stroke="#fff" strokeWidth="3.600" />
                <rect x="25.500" y="4" width="6.500" height="6.500" rx="1.200" fill="#5b6470" />
              </svg>
            </Social>
          </SocialRow>
          <LinkPanel>
            {FOOTER_LINKS.map((col) => (
              <LinkList key={col[0]}>{col.map((l) => <li key={l}>{l}</li>)}</LinkList>
            ))}
          </LinkPanel>
        </Footer>
      </Sheet>
    </Viewport>
  );
}

function AppDock() {
  return (
    <Dock>
      {APPS.map((entry, i) => {
        if (!entry) return <DockDivider key={i} />;
        const [Icon, opts = {}] = entry;
        return (
          <Slot key={i} $top={opts.top}>
            <Icon />
            {opts.dot && <RunningDot $c={opts.dot} />}
            {opts.badge && <Badge>{opts.badge}</Badge>}
          </Slot>
        );
      })}
    </Dock>
  );
}

export default function App() {
  return (
    <>
      <GlobalStyle />
      <Desktop>
        <SystemMenu />
        <BrowserWindow>
          <Tabs />
          <NavBar />
          <Page />
        </BrowserWindow>
        <AppDock />
      </Desktop>
    </>
  );
}
